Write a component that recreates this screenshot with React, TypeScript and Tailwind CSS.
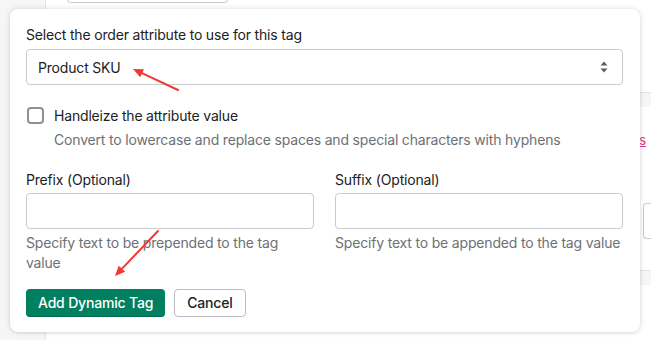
import React from "react"

function SelectArrows() {
  return (
    <svg width="10" height="14" viewBox="0 0 10 14" className="text-[#5c5f62]">
      <path d="M5 1.5 L8.5 5.5 H1.5 Z" fill="currentColor" />
      <path d="M5 12.5 L8.5 8.5 H1.5 Z" fill="currentColor" />
    </svg>
  )
}

function RedArrow({ x1, y1, x2, y2 }: { x1: number; y1: number; x2: number; y2: number }) {
  const ang = Math.atan2(y2 - y1, x2 - x1)
  const len = 11
  const spread = 0.42
  const a1x = x2 - len * Math.cos(ang - spread)
  const a1y = y2 - len * Math.sin(ang - spread)
  const a2x = x2 - len * Math.cos(ang + spread)
  const a2y = y2 - len * Math.sin(ang + spread)
  return (
    <g>
      <line x1={x1} y1={y1} x2={x2 - 4 * Math.cos(ang)} y2={y2 - 4 * Math.sin(ang)} stroke="#ef3a33" strokeWidth="2" strokeLinecap="round" />
      <polygon points={`${x2},${y2} ${a1x},${a1y} ${a2x},${a2y}`} fill="#ef3a33" />
    </g>
  )
}

export default function App() {
  return (
    <div
      className="relative w-[651px] h-[340px] overflow-hidden bg-white text-[14px] tracking-[-0.18px] text-[#202223]"
      style={{ fontFamily: "Inter, 'Noto Sans', sans-serif" }}
    >
      {/* page behind the popover */}
      <div className="flex h-full">
        <div className="w-[46px] shrink-0 bg-[#f6f6f7] border-r border-[#e4e5e7]" />
        <div className="flex-1 flex flex-col">
          <div className="ml-[21px] w-[161px] h-[4px] -mt-px border border-[#c9cccf] rounded-b-[4px]" />
          <div className="h-[89px]" />
          <div className="h-[15px] bg-[#f4f6f8] border-t border-[#e4e5e7]" />
          <div className="flex-1 flex flex-col items-end">
            <span className="mt-[26px] mr-[5px] text-[#e0368c] underline text-[13px] leading-[14px]">s</span>
            <div className="mt-[56px] w-[8px] h-[36px] border border-r-0 border-[#c9cccf] rounded-l-[4px]" />
          </div>
          <div className="h-[15px] bg-[#f4f6f8] border-t border-[#e4e5e7] mb-[55px]" />
        </div>
      </div>

      {/* popover */}
      <div className="absolute left-[10px] top-[9px] w-[630px] h-[323px] bg-white rounded-[8px] shadow-[0_0_6px_rgba(0,0,0,0.12),0_1px_3px_rgba(0,0,0,0.08)] px-[16px] pt-[16px]">
        <label className="block leading-[20px]">Select the order attribute to use for this tag</label>
        <div className="mt-[4px] h-[36px] w-[597px] border border-[#c9cccf] rounded-[4px] flex items-center justify-between pl-[11px] pr-[13px]">
          <span>Product SKU</span>
          <SelectArrows />
        </div>

        <div className="mt-[21px] flex items-start gap-[10px]">
          <div className="mt-[1px] ml-px w-[17px] h-[17px] shrink-0 border-2 border-[#8c9196] rounded-[4px] bg-white" />
          <div>
            <div className="leading-[20px]">Handleize the attribute value</div>
            <div className="mt-[4px] leading-[20px] text-[#6d7175]">
              Convert to lowercase and replace spaces and special characters with hyphens
            </div>
          </div>
        </div>

        <div className="mt-[20px] grid grid-cols-2 gap-[21px] w-[597px]">
          <div>
            <label className="block leading-[20px]">Prefix (Optional)</label>
            <div className="mt-[3px] h-[36px] border border-[#c9cccf] rounded-[4px]" />
            <div className="mt-[4px] leading-[20px] text-[#6d7175]">Specify text to be prepended to the tag value</div>
          </div>
          <div>
            <label className="block leading-[20px]">Suffix (Optional)</label>
            <div className="mt-[3px] h-[36px] border border-[#c9cccf] rounded-[4px]" />
            <div className="mt-[4px] leading-[20px] text-[#6d7175]">Specify text to be appended to the tag value</div>
          </div>
        </div>

        <div className="mt-[16px] flex gap-[9px]">
          <button className="h-[28px] px-[12px] rounded-[4px] bg-[#008060] text-white font-medium leading-[20px] shadow-[inset_0_-1px_0_rgba(0,0,0,0.2)]">
            Add Dynamic Tag
          </button>
          <button className="h-[28px] px-[12px] rounded-[4px] bg-white border border-[#babfc3] text-[#202223] font-medium leading-[20px]">
            Cancel
          </button>
        </div>
      </div>

      {/* annotation arrows */}
      <svg className="absolute inset-0 pointer-events-none" width="651" height="340">
        <RedArrow x1={178} y1={90} x2={133} y2={69} />
        <RedArrow x1={158} y1={231} x2={115} y2={276} />
      </svg>
    </div>
  )
}
